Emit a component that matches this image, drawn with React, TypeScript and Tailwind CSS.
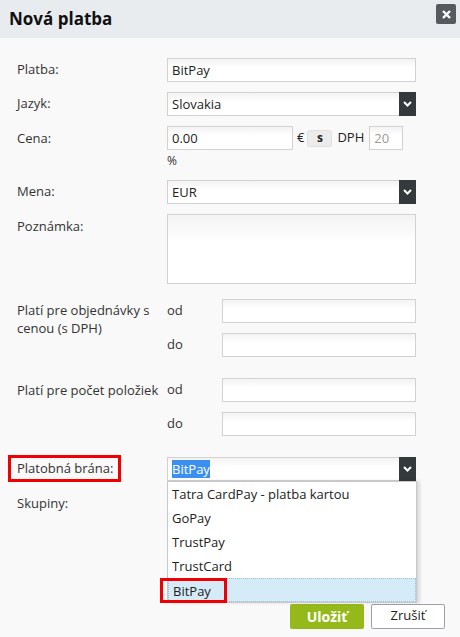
import React from "react";

const font = { fontFamily: '"Open Sans", "Noto Sans", sans-serif' };

function Field({ children, className = "" }: { children?: React.ReactNode; className?: string }) {
  return (
    <div
      className={`h-[24px] border border-[#d2d2d2] bg-white bg-gradient-to-b from-[#f3f3f3] to-white to-[40%] px-[4px] text-[13px] leading-[22px] text-[#222] ${className}`}
    >
      {children}
    </div>
  );
}

function Select({ value, highlight = false }: { value: string; highlight?: boolean }) {
  return (
    <div className="flex h-[24px] w-[249px] border border-[#d2d2d2] bg-white bg-gradient-to-b from-[#f3f3f3] to-white to-[40%]">
      <div className="flex-1 px-[4px] text-[13px] leading-[22px] text-[#222]">
        {highlight ? <span className="bg-[#3b8ff0] text-white">{value}</span> : value}
      </div>
      <div className="-my-px -mr-px flex w-[17px] items-center justify-center bg-[#34393c]">
        <svg width="9" height="6" viewBox="0 0 9 6">
          <path d="M1 1l3.5 3.5L8 1" stroke="white" strokeWidth="2" fill="none" />
        </svg>
      </div>
    </div>
  );
}

export default function App() {
  const options = ["Tatra CardPay - platba kartou", "GoPay", "TrustPay", "TrustCard", "BitPay"];
  return (
    <div className="relative h-[637px] w-[460px] overflow-hidden bg-[#f9f9f9] text-[13px] text-[#333]" style={font}>
      <div className="flex h-[38px] items-center justify-between bg-[#e9ecef] pl-[9px] pr-[4px]">
        <h1 className="text-[17px] font-bold text-[#111]">Nová platba</h1>
        <button className="-mt-[10px] flex h-[20px] w-[20px] items-center justify-center rounded-[2px] bg-[#565a5e]">
          <svg width="9" height="9" viewBox="0 0 9 9">
            <path d="M1 1l7 7M8 1L1 8" stroke="white" strokeWidth="2.4" />
          </svg>
        </button>
      </div>

      <div className="pl-[17px] pt-[20px]">
        <div className="flex items-center">
          <div className="w-[150px]">Platba:</div>
          <Field className="w-[249px]">BitPay</Field>
        </div>

        <div className="mt-[10px] flex items-center">
          <div className="w-[150px]">Jazyk:</div>
          <Select value="Slovakia" />
        </div>

        <div className="mt-[10px] flex">
          <div className="w-[150px] pt-[3px]">Cena:</div>
          <div>
            <div className="flex items-center">
              <Field className="w-[126px]">0.00</Field>
              <span className="ml-[4px] text-[#222]">€</span>
              <span className="ml-[3px] flex h-[17px] w-[25px] items-center justify-center rounded-[3px] border border-[#e0e0e0] bg-[#ececec] text-[12px] font-bold text-[#222]">
                s
              </span>
              <span className="ml-[5px] text-[#222]">DPH</span>
              <Field className="ml-[5px] w-[34px] text-[#999]">20</Field>
            </div>
            <div className="mt-[3px] text-[12px] leading-[16px]">%</div>
          </div>
        </div>

        <div className="mt-[11px] flex items-center">
          <div className="w-[150px]">Mena:</div>
          <Select value="EUR" />
        </div>

        <div className="mt-[10px] flex">
          <div className="w-[150px] pt-[3px]">Poznámka:</div>
          <Field className="h-[70px] w-[249px]" />
        </div>

        <div className="mt-[15px] flex">
          <div className="w-[150px] pr-[4px] pt-[2px] leading-[18px]">Platí pre objednávky s cenou (s DPH)</div>
          <div className="flex flex-col gap-[10px]">
            <div className="flex items-center">
              <span className="w-[55px]">od</span>
              <Field className="w-[194px]" />
            </div>
            <div className="flex items-center">
              <span className="w-[55px]">do</span>
              <Field className="w-[194px]" />
            </div>
          </div>
        </div>

        <div className="mt-[21px] flex">
          <div className="w-[150px] whitespace-nowrap pt-[3px]">Platí pre počet položiek</div>
          <div className="flex flex-col gap-[10px]">
            <div className="flex items-center">
              <span className="w-[55px]">od</span>
              <Field className="w-[194px]" />
            </div>
            <div className="flex items-center">
              <span className="w-[55px]">do</span>
              <Field className="w-[194px]" />
            </div>
          </div>
        </div>

        <div className="mt-[21px] flex items-center">
          <div className="w-[150px]">Platobná brána:</div>
          <Select value="BitPay" highlight />
        </div>

        <div className="mt-[13px] flex">
          <div className="w-[150px]">Skupiny:</div>
        </div>

        <div className="mt-[90px] flex justify-end gap-[7px] pr-[15px]">
          <button className="h-[25px] w-[74px] rounded-[2px] bg-[#95b91a] text-[14px] font-bold text-white">Uložiť</button>
          <button className="h-[25px] w-[74px] rounded-[2px] border border-[#a0a0a8] bg-white text-[13px] text-[#222]">
            Zrušiť
          </button>
        </div>
      </div>

      {/* open dropdown */}
      <div className="absolute left-[167px] top-[481px] w-[250px] border border-[#c8c8c8] bg-white shadow-[3px_0_3px_rgba(0,0,0,0.12)]">
        {options.map((o) => (
          <div
            key={o}
            className={`h-[24px] px-[4px] text-[13px] leading-[24px] text-[#222] ${
              o === "BitPay" ? "border border-dotted border-[#9fb8d8] bg-[#d6ebf8] leading-[22px]" : ""
            }`}
          >
            {o}
          </div>
        ))}
      </div>

      {/* annotations */}
      <div className="absolute left-[8px] top-[455px] h-[27px] w-[113px] border-[3px] border-[#f00000]" />
      <div className="absolute left-[160px] top-[578px] h-[25px] w-[67px] border-[3px] border-[#f00000]" />
    </div>
  );
}
